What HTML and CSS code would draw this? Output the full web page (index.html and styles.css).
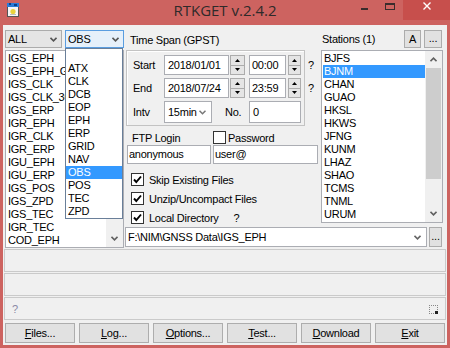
FILE: index.html
```html
<!DOCTYPE html>
<html>
<head>
<meta charset="utf-8">
<title>RTKGET</title>
<link rel="stylesheet" href="styles.css">
</head>
<body>
<div class="window">
  <div class="titlebar">
    <div class="tb-left">
      <svg class="appicon" width="14" height="16" viewBox="0 0 14 16">
        <rect x="1.5" y="4.5" width="11" height="10" fill="#f6f6f6" stroke="#555" stroke-width="1"/>
        <rect x="1" y="1" width="12" height="4" fill="#2b7bd6"/>
        <rect x="3" y="1" width="2" height="2" fill="#0b3f86"/>
        <rect x="8" y="2" width="3" height="2" fill="#0b3f86"/>
        <circle cx="7" cy="9.5" r="2.6" fill="#e9d23c"/>
        <rect x="4" y="12" width="6" height="1" fill="#bbb"/>
      </svg>
    </div>
    <div class="title">RTKGET v.2.4.2</div>
    <div class="tb-right">
      <div class="tbtn tmin"><span class="g-min"></span></div>
      <div class="tbtn tmax"><span class="g-max"></span></div>
      <div class="tbtn tclose">
        <svg width="8" height="8" viewBox="0 0 8 8"><path d="M0.5 0.5 L7.5 7.5 M7.5 0.5 L0.5 7.5" stroke="#fff" stroke-width="1.4"/></svg>
      </div>
    </div>
  </div>

  <div class="client">
    <div class="main">
      <div class="leftcol">
        <div class="combos">
          <div class="combo combo-all"><span>ALL</span><svg class="chev" width="7" height="5" viewBox="0 0 7 5"><polyline points="0.5,0.8 3.5,3.8 6.5,0.8" fill="none" stroke="#555" stroke-width="1.6"/></svg></div>
          <div class="combo combo-obs"><span>OBS</span><svg class="chev" width="7" height="5" viewBox="0 0 7 5"><polyline points="0.5,0.8 3.5,3.8 6.5,0.8" fill="none" stroke="#555" stroke-width="1.6"/></svg>
            <ul class="dropdown">
              <li>&nbsp;</li><li>ATX</li><li>CLK</li><li>DCB</li><li>EOP</li><li>EPH</li><li>ERP</li><li>GRID</li><li>NAV</li><li class="sel">OBS</li><li>POS</li><li>TEC</li><li>ZPD</li>
            </ul>
          </div>
        </div>
        <div class="listbox typelist">
          <ul class="items">
            <li>IGS_EPH</li><li>IGS_EPH_GLO</li><li>IGS_CLK</li><li>IGS_CLK_30</li><li>IGS_ERP</li><li>IGR_EPH</li><li>IGR_CLK</li><li>IGR_ERP</li><li>IGU_EPH</li><li>IGU_ERP</li><li>IGS_POS</li><li>IGS_ZPD</li><li>IGS_TEC</li><li>IGR_TEC</li><li>COD_EPH</li>
          </ul>
          <div class="vscroll">
            <div class="sarrow"><svg width="7" height="5" viewBox="0 0 7 5"><polyline points="0.5,4.2 3.5,1.2 6.5,4.2" fill="none" stroke="#606060" stroke-width="1.6"/></svg></div>
            <div class="thumb thumb-left"></div>
            <div class="track"></div>
            <div class="sarrow"><svg width="7" height="5" viewBox="0 0 7 5"><polyline points="0.5,0.8 3.5,3.8 6.5,0.8" fill="none" stroke="#606060" stroke-width="1.6"/></svg></div>
          </div>
        </div>
      </div>

      <div class="rightcol">
        <div class="upper">
          <div class="mid">
            <div class="tslabel">Time Span (GPST)</div>
            <div class="framerow">
              <div class="frame">
                <div class="row">
                  <span class="lbl">Start</span>
                  <div class="input date">2018/01/01</div>
                  <div class="spin s1"><span><svg width="5" height="3" viewBox="0 0 5 3"><polygon points="0,3 2.5,0 5,3" fill="#000"/></svg></span><span><svg width="5" height="3" viewBox="0 0 5 3"><polygon points="0,0 2.5,3 5,0" fill="#000"/></svg></span></div>
                  <div class="input time">00:00</div>
                  <div class="spin s2"><span><svg width="5" height="3" viewBox="0 0 5 3"><polygon points="0,3 2.5,0 5,3" fill="#000"/></svg></span><span><svg width="5" height="3" viewBox="0 0 5 3"><polygon points="0,0 2.5,3 5,0" fill="#000"/></svg></span></div>
                </div>
                <div class="row">
                  <span class="lbl">End</span>
                  <div class="input date">2018/07/24</div>
                  <div class="spin s1"><span><svg width="5" height="3" viewBox="0 0 5 3"><polygon points="0,3 2.5,0 5,3" fill="#000"/></svg></span><span><svg width="5" height="3" viewBox="0 0 5 3"><polygon points="0,0 2.5,3 5,0" fill="#000"/></svg></span></div>
                  <div class="input time">23:59</div>
                  <div class="spin s2"><span><svg width="5" height="3" viewBox="0 0 5 3"><polygon points="0,3 2.5,0 5,3" fill="#000"/></svg></span><span><svg width="5" height="3" viewBox="0 0 5 3"><polygon points="0,0 2.5,3 5,0" fill="#000"/></svg></span></div>
                </div>
                <div class="row row3">
                  <span class="lbl">Intv</span>
                  <div class="input intv"><span>15min</span><svg class="chev" width="7" height="5" viewBox="0 0 7 5"><polyline points="0.5,0.8 3.5,3.8 6.5,0.8" fill="none" stroke="#777" stroke-width="1.5"/></svg></div>
                  <span class="nolbl">No.</span>
                  <div class="input num">0</div>
                </div>
              </div>
              <div class="qcol"><span>?</span><span>?</span></div>
            </div>
            <div class="ftprow">
              <span class="ftplbl">FTP Login</span>
              <span class="cb"></span>
              <span class="cbtext">Password</span>
            </div>
            <div class="inputs">
              <div class="input user">anonymous</div>
              <div class="input pass">user@</div>
            </div>
            <div class="checks">
              <div class="chk"><span class="cb on"><svg width="11" height="11" viewBox="0 0 11 11"><polyline points="2,5.5 4.3,8 9,2.5" fill="none" stroke="#000" stroke-width="1.9"/></svg></span><span>Skip Existing Files</span></div>
              <div class="chk"><span class="cb on"><svg width="11" height="11" viewBox="0 0 11 11"><polyline points="2,5.5 4.3,8 9,2.5" fill="none" stroke="#000" stroke-width="1.9"/></svg></span><span>Unzip/Uncompact Files</span></div>
              <div class="chk"><span class="cb on"><svg width="11" height="11" viewBox="0 0 11 11"><polyline points="2,5.5 4.3,8 9,2.5" fill="none" stroke="#000" stroke-width="1.9"/></svg></span><span>Local Directory</span><span class="q2">?</span></div>
            </div>
          </div>

          <div class="stations">
            <div class="sthead">
              <span class="stlbl">Stations (1)</span>
              <div class="sbtn sa">A</div>
              <div class="sbtn sdots">...</div>
            </div>
            <div class="listbox stlist">
              <ul class="items">
                <li>BJFS</li><li class="sel">BJNM</li><li>CHAN</li><li>GUAO</li><li>HKSL</li><li>HKWS</li><li>JFNG</li><li>KUNM</li><li>LHAZ</li><li>SHAO</li><li>TCMS</li><li>TNML</li><li>URUM</li>
              </ul>
              <div class="vscroll">
                <div class="sarrow"><svg width="7" height="5" viewBox="0 0 7 5"><polyline points="0.5,4.2 3.5,1.2 6.5,4.2" fill="none" stroke="#606060" stroke-width="1.6"/></svg></div>
                <div class="thumb thumb-st"></div>
                <div class="track"></div>
                <div class="sarrow"><svg width="7" height="5" viewBox="0 0 7 5"><polyline points="0.5,0.8 3.5,3.8 6.5,0.8" fill="none" stroke="#606060" stroke-width="1.6"/></svg></div>
              </div>
            </div>
          </div>
        </div>

        <div class="dirrow">
          <div class="input dir"><span>F:\NIM\GNSS Data\IGS_EPH</span><svg class="chev" width="7" height="5" viewBox="0 0 7 5"><polyline points="0.5,0.8 3.5,3.8 6.5,0.8" fill="none" stroke="#666" stroke-width="1.6"/></svg></div>
          <div class="sbtn ddots">...</div>
        </div>
      </div>
    </div>

    <div class="panel"></div>
    <div class="panel"></div>
    <div class="panel p3"><span class="pq">?</span><span class="grip"><span class="gdot"></span></span></div>

    <div class="buttons">
      <div class="btn"><u>F</u>iles...</div>
      <div class="btn"><u>L</u>og...</div>
      <div class="btn"><u>O</u>ptions...</div>
      <div class="btn"><u>T</u>est...</div>
      <div class="btn"><u>D</u>ownload</div>
      <div class="btn"><u>E</u>xit</div>
    </div>
  </div>
</div>
</body>
</html>
```
FILE: styles.css
```css
* { box-sizing: border-box; margin: 0; padding: 0; }
body {
  margin: 0;
  width: 450px;
  height: 348px;
  overflow: hidden;
  font-family: "Liberation Sans", Arial, sans-serif;
  font-size: 11px;
  letter-spacing: -0.25px;
  color: #000;
  background: #cd6360;
}
ul { list-style: none; }

.window {
  width: 450px;
  height: 348px;
  background: #cd6360;
  padding: 0 3px 3px 3px;
  display: flex;
  flex-direction: column;
}

/* title bar */
.titlebar {
  height: 25px;
  display: grid;
  grid-template-columns: 1fr auto 1fr;
}
.tb-left { display: flex; align-items: flex-start; padding: 2px 0 0 3px; }
.title {
  font-family: "Open Sans", "Noto Sans", sans-serif;
  font-size: 15px;
  letter-spacing: 0;
  line-height: 20px;
  color: #2e2a2a;
}
.tb-right { display: flex; justify-content: flex-end; margin-right: -3px; }
.tbtn { height: 20px; display: flex; justify-content: center; }
.tmin { width: 26px; padding-top: 8px; }
.tmax { width: 26px; padding-top: 3px; }
.tclose { width: 47px; background: #c74f4c; padding-top: 2px; }
.g-min { width: 7px; height: 2px; background: #3a2c2c; }
.g-max { width: 10px; height: 7px; border: 1px solid #3a2c2c; border-top-width: 2px; }

/* client */
.client {
  height: 320px;
  background: #f0f0f0;
  padding: 5px 2px 2px 2px;
  display: flex;
  flex-direction: column;
}
.main { display: flex; height: 218px; }
.leftcol { width: 119px; display: flex; flex-direction: column; }
.combos { display: flex; gap: 3px; height: 18px; }
.combo {
  position: relative;
  height: 18px;
  border: 1px solid #acacac;
  background: #e5e5e5;
  display: flex;
  align-items: center;
  justify-content: space-between;
  padding: 0 4px 0 2px;
}
.combo-all { width: 57px; }
.combo-obs { width: 59px; border-color: #5a9de0; background: #e6f0fa; }
.dropdown {
  position: absolute;
  top: 17px;
  left: -1px;
  width: 58px;
  border: 1px solid #6a7f99;
  background: #fff;
  z-index: 5;
}
.dropdown li { height: 13px; line-height: 13px; padding-left: 2px; }
.dropdown li.sel { background: #3399ff; color: #fff; }

.listbox {
  border: 1px solid #abadb3;
  background: #fff;
  display: flex;
}
.typelist { margin-top: 2px; height: 198px; }
.items { flex: 1; padding: 1px 0 0 1px; overflow: hidden; }
.items li { height: 13px; line-height: 13px; padding-left: 1px; white-space: nowrap; }
.items li.sel { background: #3399ff; color: #fff; }
.vscroll { width: 17px; background: #f0f0f0; display: flex; flex-direction: column; }
.sarrow { height: 17px; display: flex; align-items: center; justify-content: center; }
.track { flex: 1; }
.thumb { background: #cdcdcd; margin: 0 1px; }
.thumb-left { height: 60px; }
.thumb-st { height: 111px; }

.rightcol { margin-left: 1px; width: 320px; display: flex; flex-direction: column; }
.upper { display: flex; height: 197px; }
.mid { width: 196px; }
.tslabel { height: 20px; line-height: 20px; padding-left: 5px; }
.framerow { display: flex; height: 76px; }
.frame {
  margin-left: 1px;
  width: 179px;
  border: 1px solid #c3c3c3;
  box-shadow: inset 1px 1px 0 #fff;
  padding: 4px 3px 2px 6px;
  display: flex;
  flex-direction: column;
  gap: 3px;
}
.row { display: flex; align-items: center; height: 20px; }
.row3 { height: 22px; }
.lbl { width: 31px; }
.input {
  border: 1px solid #abadb3;
  background: #fff;
  height: 20px;
  line-height: 18px;
  padding-left: 3px;
  white-space: nowrap;
  overflow: hidden;
}
.date { width: 65px; }
.time { width: 37px; margin-left: 4px; padding-left: 2px; }
.spin { height: 20px; display: flex; flex-direction: column; }
.s1 { width: 15px; margin-left: 1px; }
.s2 { width: 13px; margin-left: 2px; }
.spin span {
  flex: 1;
  border: 1px solid #acacac;
  background: #e5e5e5;
  display: flex;
  align-items: center;
  justify-content: center;
}
.spin span + span { margin-top: -1px; }
.intv {
  width: 48px;
  height: 22px;
  line-height: 20px;
  display: flex;
  align-items: center;
  justify-content: space-between;
  padding-right: 5px;
}
.nolbl { width: 37px; padding-left: 13px; }
.num { width: 52px; height: 22px; line-height: 20px; }
.qcol { margin-left: 3px; padding-top: 5px; display: flex; flex-direction: column; gap: 3px; }
.qcol span { height: 20px; line-height: 20px; }

.ftprow { margin-top: 5px; height: 13px; display: flex; align-items: center; }
.ftplbl { width: 88px; padding-left: 7px; }
.cb {
  width: 13px;
  height: 13px;
  border: 1px solid #333;
  background: #fff;
  display: inline-flex;
  align-items: center;
  justify-content: center;
  flex: none;
}
.cbtext { margin-left: 2px; }
.inputs { margin-top: 1px; display: flex; gap: 2px; padding-left: 2px; }
.inputs .input { height: 19px; line-height: 17px; padding-left: 1px; }
.user { width: 84px; }
.pass { width: 105px; }
.checks { margin-top: 6px; }
.chk { height: 19px; display: flex; align-items: center; padding-left: 6px; gap: 5px; }
.q2 { margin-left: 10px; }

.stations { width: 122px; }
.sthead { height: 18px; display: flex; align-items: center; }
.stlbl { padding-left: 1px; }
.sbtn {
  height: 18px;
  border: 1px solid #acacac;
  background: #e1e1e1;
  text-align: center;
  line-height: 15px;
}
.sa { width: 17px; margin-left: auto; line-height: 16px; }
.sdots { width: 18px; margin-left: 3px; margin-right: 1px; }
.stlist { margin-top: 2px; height: 173px; }

.dirrow { display: flex; gap: 2px; height: 20px; }
.dir {
  width: 302px;
  display: flex;
  align-items: center;
  justify-content: space-between;
  padding: 0 5px 0 2px;
}
.ddots { width: 13px; height: 20px; line-height: 17px; }

.panel {
  height: 23px;
  margin: 1px -1px 0 -1px;
  border: 1px solid #cacaca;
  flex: none;
}
.p3 { display: flex; align-items: center; justify-content: space-between; padding: 0 7px 0 7px; }
.pq { color: #8a8aa6; }
.grip {
  width: 9px;
  height: 9px;
  border: 1px dotted #888;
  position: relative;
  margin-top: 2px;
}
.gdot {
  position: absolute;
  right: -1px;
  bottom: -1px;
  width: 3px;
  height: 3px;
  background: #222;
}

.buttons { margin-top: 3px; display: flex; gap: 4px; height: 20px; }
.btn {
  flex: 1;
  border: 1px solid #adadad;
  background: #e1e1e1;
  text-align: center;
  line-height: 18px;
}
```
